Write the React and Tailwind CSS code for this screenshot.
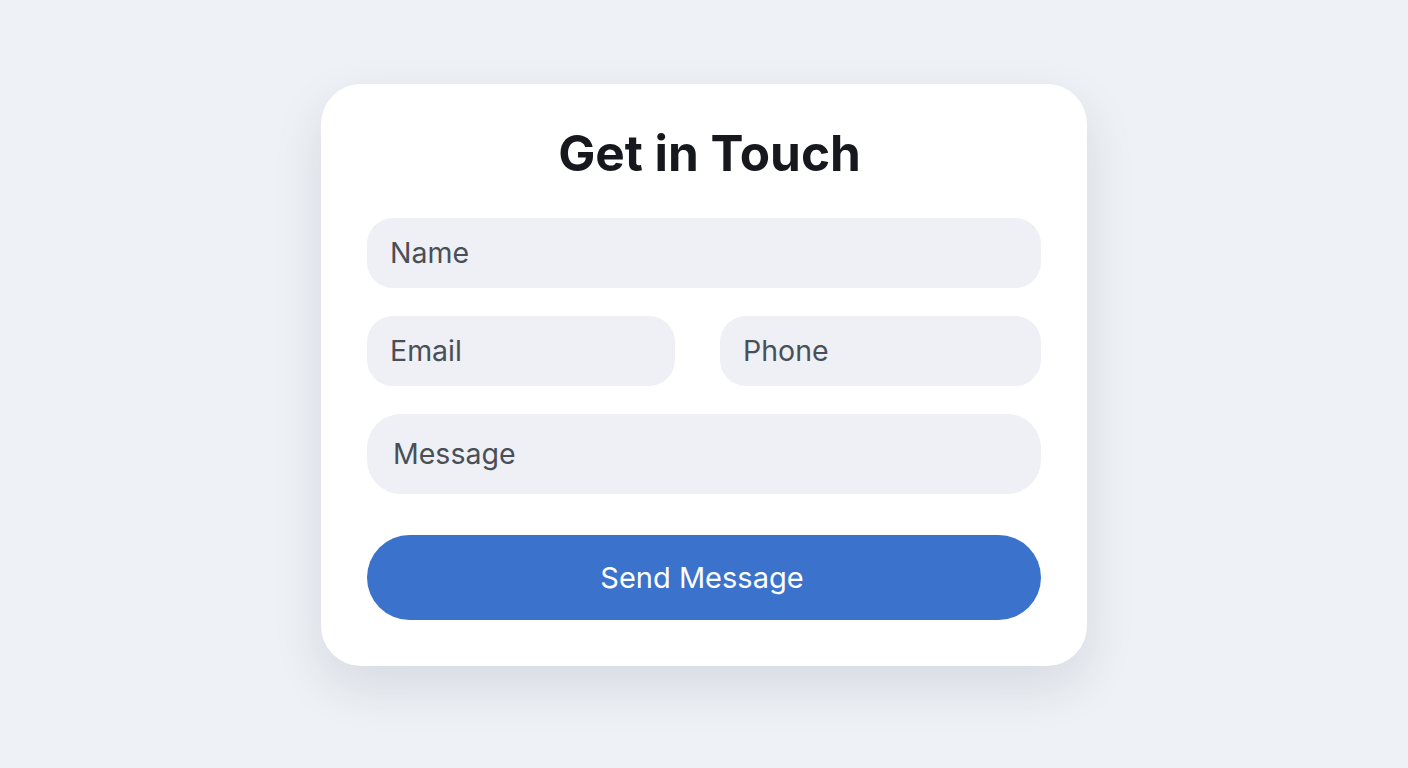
export default function App() {
  const field =
    "h-[70px] rounded-[26px] bg-[#eef0f5] flex items-center pl-[23px] text-[28.5px] text-[#4a4f57]";
  return (
    <div
      className="min-h-screen w-full bg-[#eef1f5] flex justify-center pt-[84px]"
      style={{ fontFamily: "Inter, 'Noto Sans', sans-serif" }}
    >
      <div className="w-[766px] h-[582px] rounded-[40px] bg-white shadow-[0_20px_50px_rgba(40,55,90,0.12)] px-[46px] pt-[39px] flex flex-col">
        <h1 className="h-[60px] pl-[11px] text-center text-[49.5px] leading-[60px] font-bold text-[#16181d]">
          Get in Touch
        </h1>
        <div className={field + " mt-[35px]"}>Name</div>
        <div className="mt-[28px] flex gap-[45px]">
          <div className={field + " w-[308px]"}>Email</div>
          <div className={field + " flex-1"}>Phone</div>
        </div>
        <div className="mt-[28px] h-[80px] rounded-[34px] bg-[#eef0f5] flex items-center pl-[26px] text-[28.5px] text-[#4a4f57]">
          Message
        </div>
        <div className="mt-[41px] h-[85px] rounded-full bg-[#3a72cc] flex items-center justify-center pr-[4px] text-[29px] text-white">
          Send Message
        </div>
      </div>
    </div>
  );
}
